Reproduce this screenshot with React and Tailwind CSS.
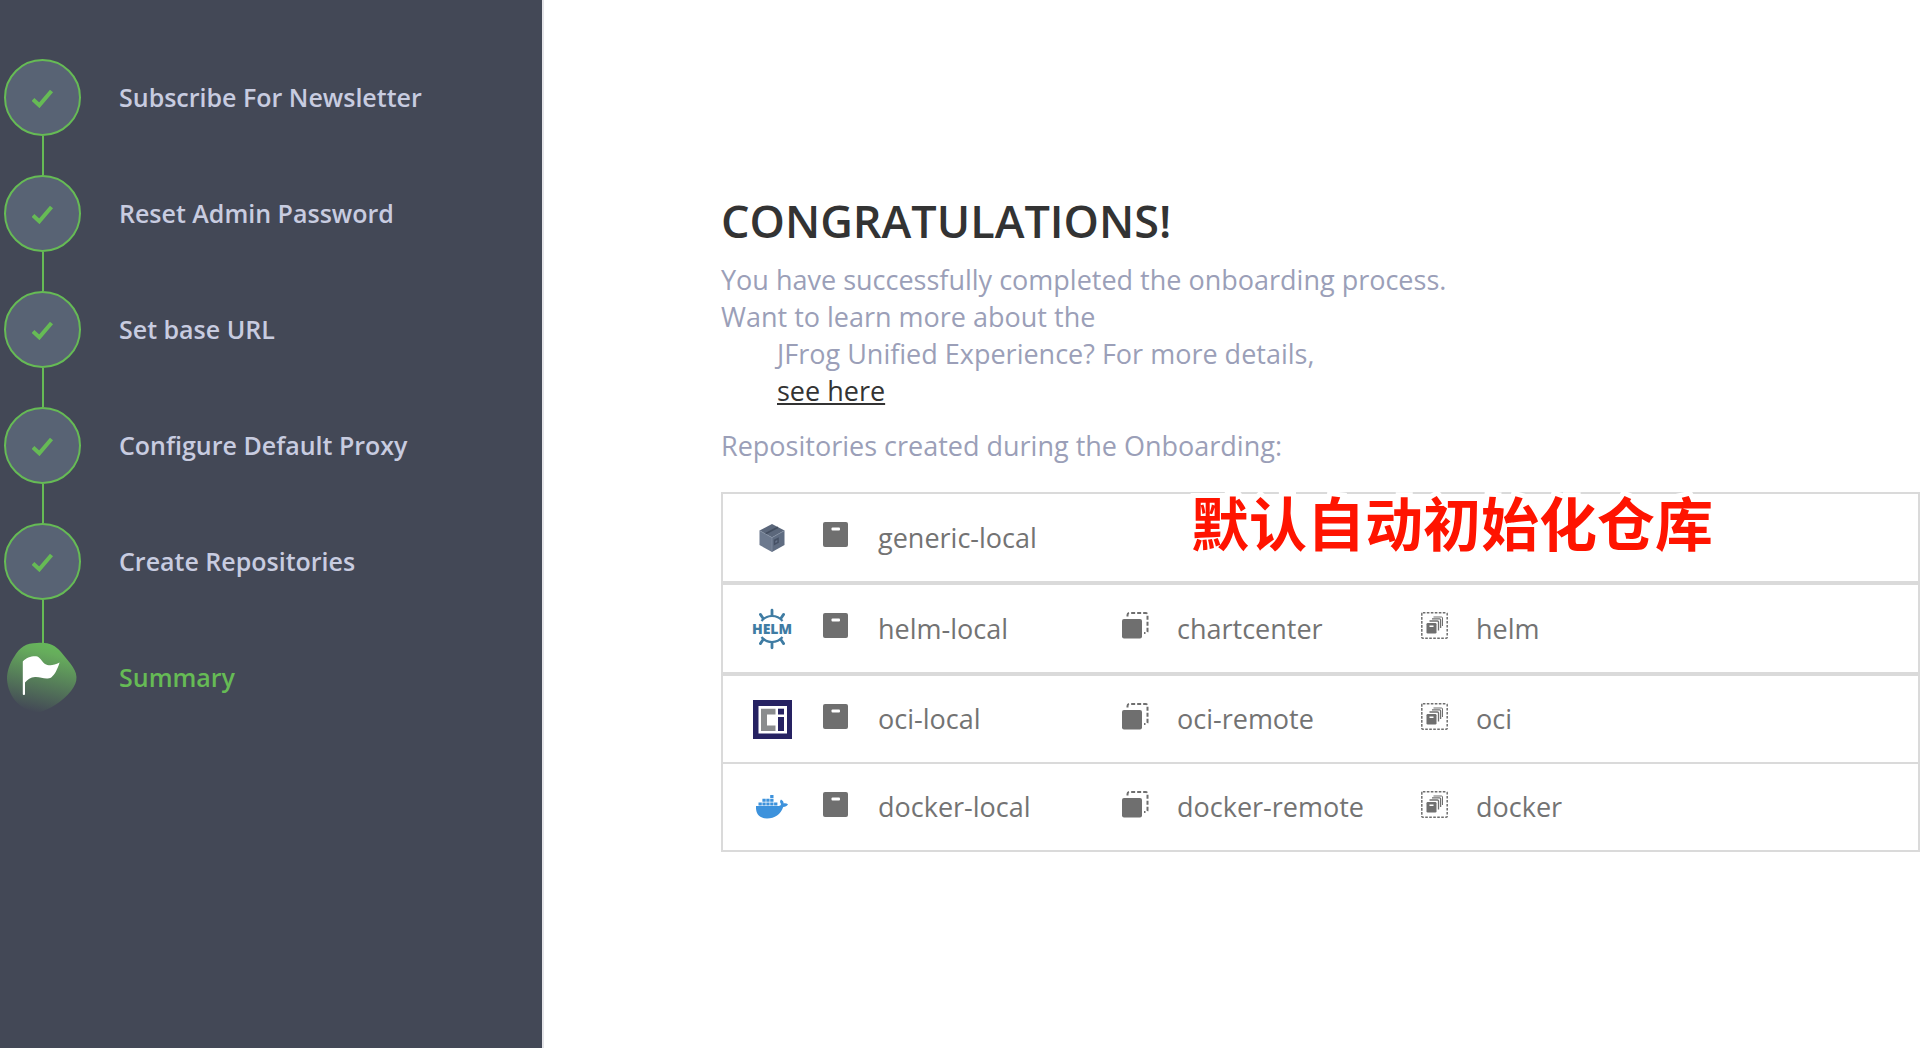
import React from "react";

const steps = [
  "Subscribe For Newsletter",
  "Reset Admin Password",
  "Set base URL",
  "Configure Default Proxy",
  "Create Repositories",
];

function CheckIcon() {
  return (
    <svg width="22" height="20" viewBox="0 0 22 20" fill="none" aria-hidden="true">
      <path d="M1 11.500 L7.300 17.300 L19.500 3" stroke="#66bb55" strokeWidth="4" />
    </svg>
  );
}

function FlagIcon() {
  return (
    <svg width="77" height="77" viewBox="0 0 77 77" aria-hidden="true">
      <defs>
        <linearGradient id="blob" x1="0.62" y1="0" x2="0.38" y2="1">
          <stop offset="0" stopColor="#66b85a" />
          <stop offset="0.15" stopColor="#66ac5c" />
          <stop offset="1" stopColor="#434856" />
        </linearGradient>
      </defs>
      <rect x="38" y="0" width="2" height="6" fill="#66bb55" />
      <path
        d="M33 4 C44 3 51 6 57 13 L66 24 C74 34 75 42 67 52 C58 63 46 70 36 73 C20 74 4 60 3 40 C3 32 6 24 10 18 C16 8 22 4 33 4 Z"
        fill="url(#blob)"
      />
      <path
        d="M18.8 22.5 C22 18.5 27 17 32 17.2 C36 17.6 37.5 22.5 41 25 C44 26.8 49 27.2 55.6 23.6 C53.5 30 50.8 36 47.5 38.2 C42 41.5 37 37.6 31 38 C26.5 38.3 23.5 40.5 21 43.6 L21 55 C21 56.3 18.8 56.3 18.8 55 Z"
        fill="#fff"
      />
    </svg>
  );
}

function BoxIcon() {
  return (
    <svg width="26" height="28" viewBox="0 0 26 28" aria-hidden="true">
      <path d="M13 0 L25.5 6.600 L13 13.600 L0.500 6.600 Z" fill="#5b677b" />
      <path d="M0.500 6.600 L13 13.600 V28 L0.500 21 Z" fill="#6c798e" />
      <path d="M25.500 6.600 L13 13.600 V28 L25.500 21 Z" fill="#5f6c81" />
      <path d="M6.500 9.800 L19 3.200" stroke="#434e60" strokeWidth="1.800" />
      <path d="M0.800 6.800 L13 13.600 L25.200 6.800 M13 13.600 V27.600" fill="none" stroke="#8490a3" strokeWidth="0.700" />
      <path d="M14.800 15.800 L19.800 13.200 V18.800 L14.800 21.400 Z" fill="#465165" />
      <path d="M16.300 16.900 L18.300 15.900 V18 L16.300 19 Z" fill="#66738a" />
    </svg>
  );
}

function HelmIcon() {
  return (
    <svg width="40" height="42" viewBox="0 0 40 42" role="img" aria-label="Helm">
      <g fill="none" stroke="#3f7ca3" strokeWidth="2.2">
        <path d="M9.500 13 A13.500 13.500 0 0 1 30.500 13" />
        <path d="M9.500 29 A13.500 13.500 0 0 0 30.500 29" />
        <path
          strokeWidth="2.8"
          strokeLinecap="round"
          d="M20 7.500 V2.200 M20 34.500 V39.800 M11.200 10.500 L8.400 6.400 M28.800 10.500 L31.600 6.400 M11.200 31.500 L8.400 35.600 M28.800 31.500 L31.600 35.600"
        />
      </g>
      <text
        x="20"
        y="26"
        textAnchor="middle"
        fill="#3f7ca3"
        className="font-['Open_Sans',sans-serif] text-[14px] font-extrabold"
      >
        HELM
      </text>
    </svg>
  );
}

function OciIcon() {
  return (
    <svg width="39" height="39" viewBox="0 0 39 39" aria-hidden="true">
      <rect width="39" height="39" fill="#262262" />
      <rect x="5.500" y="6" width="28.500" height="27.500" fill="#fff" />
      <path d="M8 8.700 H22.500 V14.500 H14 V25.500 H22.500 V31 H8 Z" fill="#8a8c8e" />
      <rect x="25" y="8.700" width="6" height="5.800" fill="#262262" />
      <rect x="25" y="17" width="6" height="14" fill="#262262" />
    </svg>
  );
}

function DockerIcon() {
  return (
    <svg width="34" height="24" viewBox="0 0 34 24" fill="#3d92dc" aria-hidden="true">
      <path d="M1 11 H23.500 C25 11 26 10.300 26 9 C24.500 7 25 5.600 26 4.500 C28 5.600 28.600 7 28.700 8.500 C30 8.200 31.800 8.400 33 9.300 C32 11.300 30.400 12 28.200 12 C25.500 19.500 20 23.500 12 23.500 C4 23.500 0.500 18.500 1 11 Z" />
      <path d="M3.500 7.500h3.300v3h-3.300z M7.400 7.500h3.300v3h-3.300z M11.300 7.500h3.300v3h-3.300z M15.200 7.500h3.300v3h-3.300z M19.100 7.500h3.300v3h-3.300z M7.400 3.800h3.300v3h-3.300z M11.300 3.800h3.300v3h-3.300z M15.200 3.800h3.300v3h-3.300z M15.200 0h3.300v3h-3.300z" />
    </svg>
  );
}

function LocalIcon() {
  return (
    <svg className="mb-1.5" width="27" height="27" viewBox="0 0 27 27" aria-hidden="true">
      <rect x="0" y="1" width="25" height="25" rx="2" fill="#6f6f6f" />
      <rect x="8.500" y="6.500" width="8.500" height="3" rx="1" fill="#fff" />
    </svg>
  );
}

function RemoteIcon() {
  return (
    <svg className="mb-1.5" width="27" height="27" viewBox="0 0 27 27" aria-hidden="true">
      <rect x="0" y="7" width="20" height="19.500" rx="2" fill="#6f6f6f" />
      <path
        d="M5.500 4.500 V3 Q5.500 1 7.500 1 H23.500 Q25.500 1 25.500 3 V19 Q25.500 21 23.500 21 H22"
        fill="none"
        stroke="#6f6f6f"
        strokeWidth="2"
        strokeDasharray="4 2"
      />
    </svg>
  );
}

function VirtualIcon() {
  return (
    <svg className="mb-1.5" width="27" height="27" viewBox="0 0 27 27" aria-hidden="true">
      <rect x="0.800" y="0.800" width="25.400" height="25.400" rx="1" fill="none" stroke="#6f6f6f" strokeWidth="1.500" strokeDasharray="2.600 1.400" />
      <rect x="5.500" y="11" width="10" height="10.500" rx="1.200" fill="#6f6f6f" />
      <rect x="8.500" y="13.500" width="4" height="1.500" fill="#fff" />
      <path d="M8.500 9 H16.500 Q17.500 9 17.500 10 V18.500 M11 6.800 H18.600 Q19.600 6.800 19.600 7.800 V16" fill="none" stroke="#6f6f6f" strokeWidth="1.300" />
      <path d="M12.500 5 H20.500 Q21.500 5 21.500 6 V14" fill="none" stroke="#6f6f6f" strokeWidth="1" />
    </svg>
  );
}

const rows = [
  { type: "Generic", Icon: BoxIcon, height: "h-[87px]", border: "border-b-4", names: ["generic-local"] },
  { type: "Helm", Icon: HelmIcon, height: "h-[87px]", border: "border-b-4", names: ["helm-local", "chartcenter", "helm"] },
  { type: "OCI", Icon: OciIcon, height: "h-[86px]", border: "border-b-2", names: ["oci-local", "oci-remote", "oci"] },
  { type: "Docker", Icon: DockerIcon, height: "h-[86px]", border: "", names: ["docker-local", "docker-remote", "docker"] },
];

const kindIcons = [LocalIcon, RemoteIcon, VirtualIcon];

function Sidebar() {
  return (
    <aside className="w-[544px] shrink-0 border-r-2 border-[#e4e4e8] bg-[#434856] bg-clip-padding pl-1 pt-[59px]">
      <ol className="text-[25px] font-semibold text-[#c8cce0]">
        {steps.map((label) => (
          <li key={label} className="flex gap-[38px]">
            <div className="flex flex-col items-center">
              <div className="flex size-[77px] items-center justify-center rounded-full border-2 border-[#66bb55] bg-[#586374]">
                <CheckIcon />
              </div>
              <div className="h-[39px] w-[2px] bg-[#66bb55]" />
            </div>
            <span className="leading-[76px]">{label}</span>
          </li>
        ))}
        <li className="flex gap-[38px]" aria-current="step">
          <FlagIcon />
          <span className="leading-[76px] text-[#66bb55]">Summary</span>
        </li>
      </ol>
    </aside>
  );
}

function RepositoryTable() {
  return (
    <table className="w-full table-fixed border-separate border-spacing-0 border-2 border-[#dadada] text-[27px] leading-9 text-[#737373]">
      <colgroup>
        <col className="w-[100px]" />
        <col className="w-[299px]" />
        <col className="w-[299px]" />
        <col />
      </colgroup>
      <tbody>
        {rows.map(({ type, Icon, height, border, names }) => (
          <tr key={type}>
            <th scope="row" aria-label={type} className={`border-[#dadada] p-0 pr-0.5 ${border}`}>
              <div className={`flex items-center justify-center ${height}`}>
                <Icon />
              </div>
            </th>
            {kindIcons.map((Kind, i) => (
              <td key={i} className={`border-[#dadada] p-0 ${border}`}>
                {names[i] && (
                  <div className="flex items-center gap-7">
                    <Kind />
                    <span>{names[i]}</span>
                  </div>
                )}
              </td>
            ))}
          </tr>
        ))}
      </tbody>
    </table>
  );
}

export default function App() {
  return (
    <div className="flex min-h-screen bg-white font-['Open_Sans',sans-serif]">
      <Sidebar />
      <main className="min-w-0 grow pl-[177px] pt-[188px]">
        <h1 className="text-[45px] leading-[66px] font-semibold text-[#333]">CONGRATULATIONS!</h1>
        <div className="mt-[7px] text-[27px] leading-[37px] text-[#9b9fb8]">
          <p>You have successfully completed the onboarding process.</p>
          <p>Want to learn more about the</p>
          <p className="pl-14">
            JFrog Unified Experience? For more details,
            <br />
            <a href="#details" className="text-[#333] underline">
              see here
            </a>
          </p>
          <p className="mt-[18px]">Repositories created during the Onboarding:</p>
        </div>
        <div className="relative mt-7">
          <RepositoryTable />
          <p className="absolute left-[470px] -top-[11px] font-['Noto_Sans_CJK_SC',sans-serif] text-[58px] leading-[80px] font-bold whitespace-nowrap text-[#ff1400] [-webkit-text-stroke:10px_white] [paint-order:stroke_fill]">
            默认自动初始化仓库
          </p>
        </div>
      </main>
    </div>
  );
}
